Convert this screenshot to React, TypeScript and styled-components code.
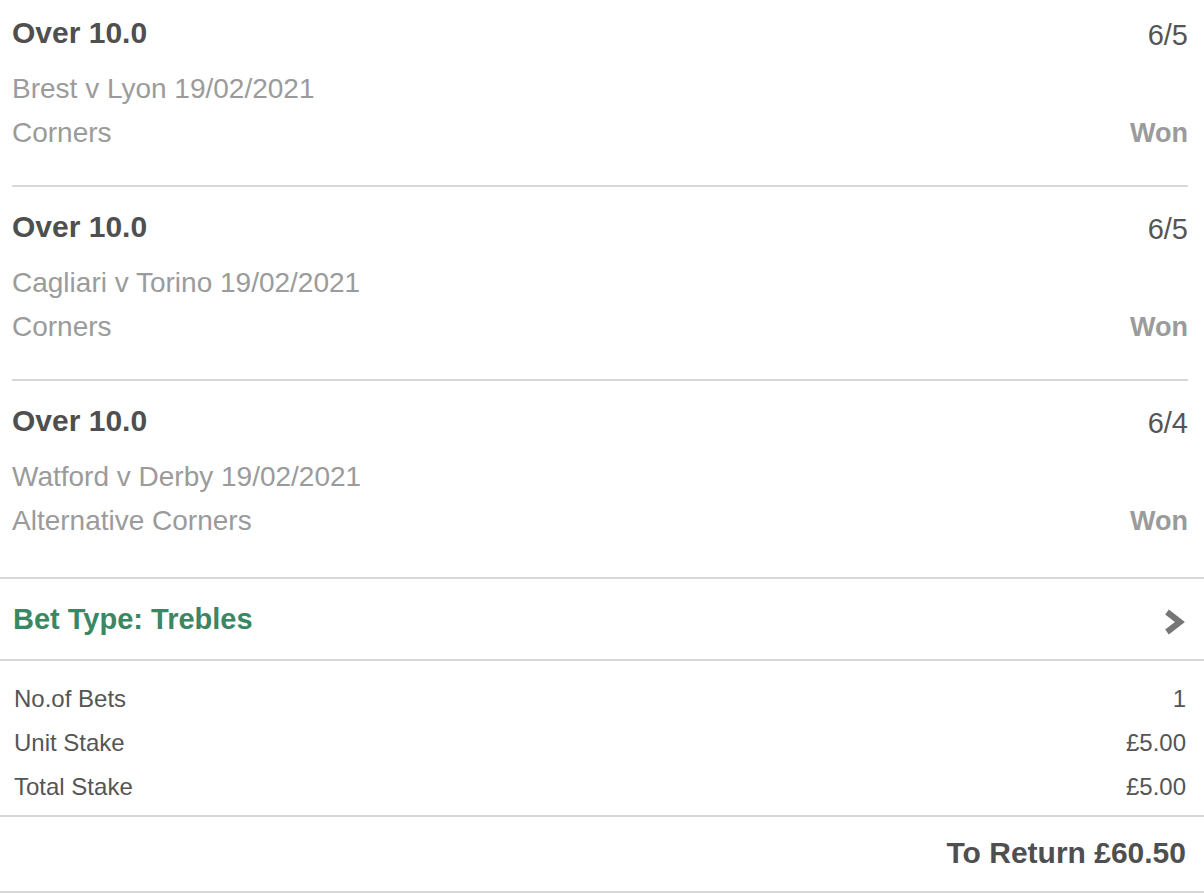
import React from "react";
import styled, { createGlobalStyle } from "styled-components";

const GlobalStyle = createGlobalStyle`
  html, body {
    margin: 0;
    padding: 0;
    background: #ffffff;
    font-family: "Liberation Sans", Arial, Helvetica, sans-serif;
    overflow: hidden;
  }
`;

type Selection = {
  title: string;
  odds: string;
  event: string;
  market: string;
  result: string;
};

const selections: Selection[] = [
  { title: "Over 10.0", odds: "6/5", event: "Brest v Lyon 19/02/2021", market: "Corners", result: "Won" },
  { title: "Over 10.0", odds: "6/5", event: "Cagliari v Torino 19/02/2021", market: "Corners", result: "Won" },
  { title: "Over 10.0", odds: "6/4", event: "Watford v Derby 19/02/2021", market: "Alternative Corners", result: "Won" },
];

const summary = [
  { label: "No.of Bets", value: "1" },
  { label: "Unit Stake", value: "£5.00" },
  { label: "Total Stake", value: "£5.00" },
];

const Chevron = () => (
  <ChevronSvg viewBox="0 0 24 32" width="24" height="32">
    <polyline
      points="6,6 19,16 6,26"
      fill="none"
      stroke="#767676"
      strokeWidth="6"
      strokeLinejoin="miter"
      strokeLinecap="butt"
    />
  </ChevronSvg>
);

const App = () => {
  return (
    <Page>
      <GlobalStyle />
      <SelectionList>
        {selections.map((s, i) => (
          <SelectionItem key={i} last={i === selections.length - 1}>
            <HeaderRow>
              <Title>{s.title}</Title>
              <Odds>{s.odds}</Odds>
            </HeaderRow>
            <SubLine>{s.event}</SubLine>
            <SubRow>
              <SubLine>{s.market}</SubLine>
              <Result>{s.result}</Result>
            </SubRow>
          </SelectionItem>
        ))}
      </SelectionList>
      <BetTypeRow>
        <BetType>Bet Type: Trebles</BetType>
        <Chevron />
      </BetTypeRow>
      <Summary>
        {summary.map((row) => (
          <SummaryRow key={row.label}>
            <span>{row.label}</span>
            <span>{row.value}</span>
          </SummaryRow>
        ))}
      </Summary>
      <ReturnRow>To Return £60.50</ReturnRow>
    </Page>
  );
};

export default App;

const Page = styled.div`
  width: 1204px;
  height: 893px;
  overflow: hidden;
  background: #ffffff;
`;

const SelectionList = styled.div`
  margin: -7px 16px 0 12px;
`;

const SelectionItem = styled.div<{ last?: boolean }>`
  padding: 22px 0 ${(p) => (p.last ? "34px" : "30px")} 0;
  border-bottom: ${(p) => (p.last ? "none" : "2px solid #d8d8d8")};
`;

const HeaderRow = styled.div`
  display: flex;
  justify-content: space-between;
  align-items: flex-start;
  height: 36px;
  margin-bottom: 16px;
`;

const Title = styled.div`
  font-size: 30px;
  line-height: 36px;
  font-weight: 700;
  color: #4f4f4f;
`;

const Odds = styled.div`
  font-size: 29px;
  line-height: 32px;
  padding-top: 4px;
  color: #555555;
`;

const SubRow = styled.div`
  display: flex;
  justify-content: space-between;
  align-items: center;
  height: 44px;
`;

const SubLine = styled.div`
  font-size: 28px;
  line-height: 44px;
  color: #9b9b9b;
`;

const Result = styled.div`
  font-size: 27px;
  line-height: 44px;
  font-weight: 700;
  color: #9b9b9b;
`;

const BetTypeRow = styled.div`
  height: 80px;
  display: flex;
  align-items: center;
  justify-content: space-between;
  padding: 0 19px 0 13px;
  border-top: 2px solid #d8d8d8;
  border-bottom: 2px solid #d8d8d8;
`;

const BetType = styled.div`
  font-size: 29px;
  line-height: 36px;
  font-weight: 700;
  color: #3b8764;
  margin-top: -1px;
`;

const ChevronSvg = styled.svg`
  display: block;
  margin-top: 6px;
  filter: blur(0.6px);
`;

const Summary = styled.div`
  padding: 16px 18px 6px 14px;
  border-bottom: 2px solid #d8d8d8;
`;

const SummaryRow = styled.div`
  display: flex;
  justify-content: space-between;
  font-size: 24px;
  line-height: 44px;
  color: #555555;
`;

const ReturnRow = styled.div`
  padding: 18px 18px 20px 14px;
  text-align: right;
  font-size: 30px;
  line-height: 36px;
  font-weight: 700;
  color: #4f4f4f;
  border-bottom: 2px solid #d8d8d8;
`;
